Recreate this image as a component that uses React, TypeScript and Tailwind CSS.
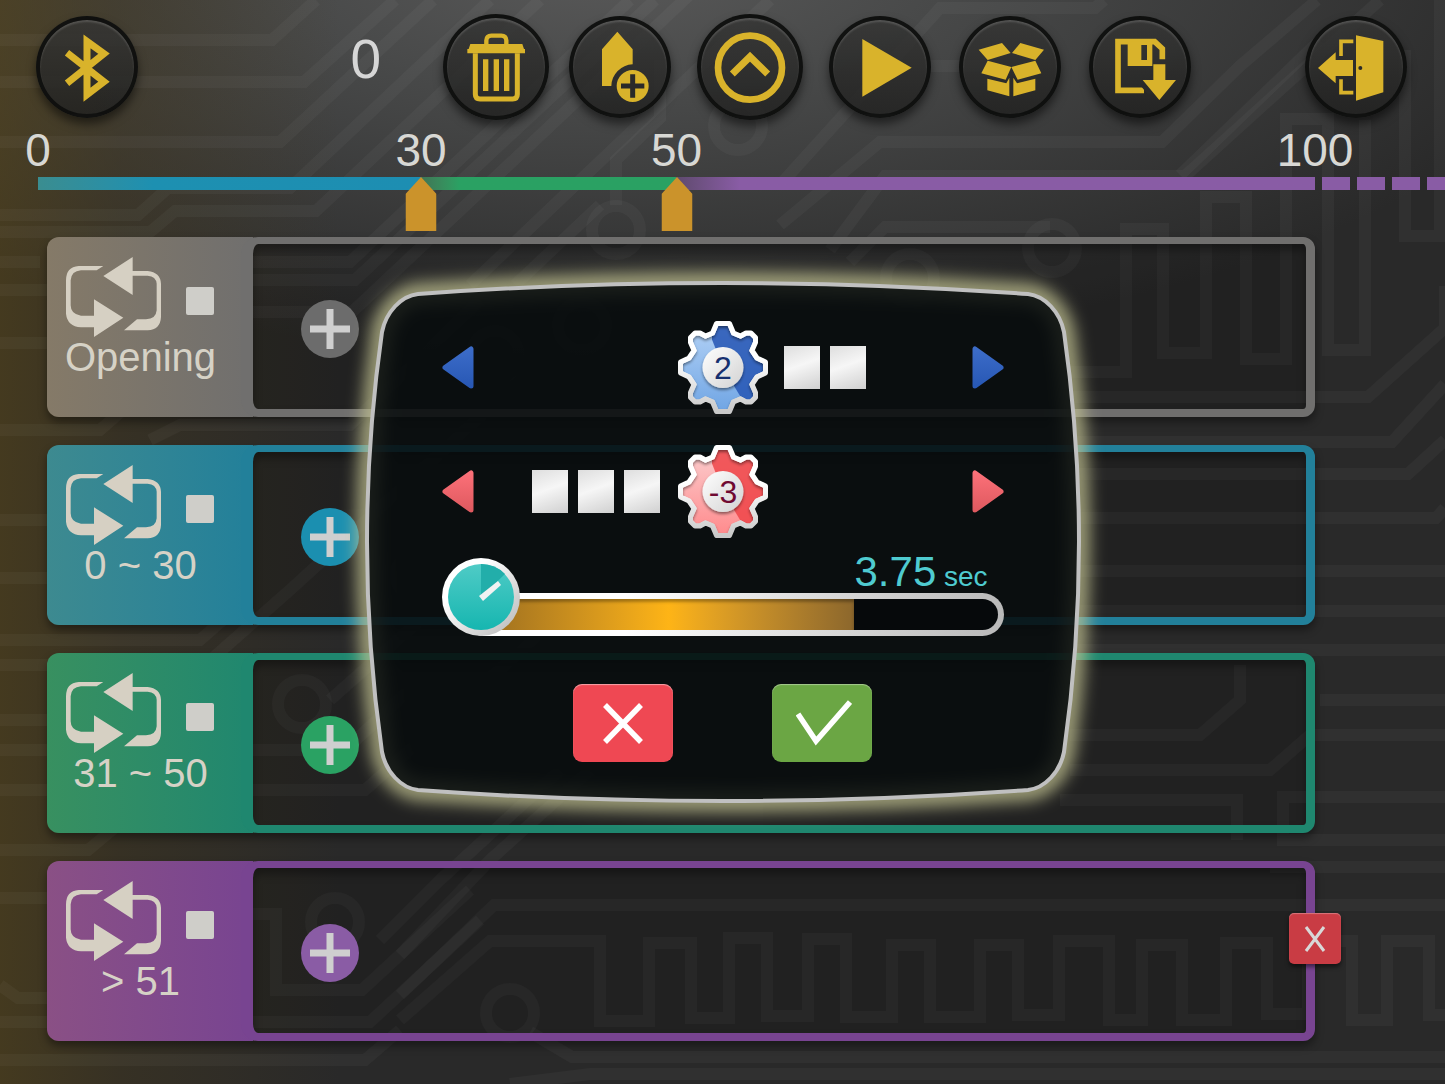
import { useState } from 'react';
import type { ReactNode } from 'react';

const MAX_SECONDS = 5;

const ranges = [
    { label: 'Opening', panel: 'from-[#857a68] to-[#706f6e]', frame: 'border-[#706f6e]', add: 'bg-[#6c6c6c]', removable: false },
    { label: '0 ~ 30', panel: 'from-[#3d8a90] to-[#22809a]', frame: 'border-[#22809a]', add: 'bg-[#1b8fb0]', removable: false },
    { label: '31 ~ 50', panel: 'from-[#389060] to-[#1f876f]', frame: 'border-[#1f876f]', add: 'bg-[#2aa263]', removable: false },
    { label: '> 51', panel: 'from-[#8a5085] to-[#784491]', frame: 'border-[#784491]', add: 'bg-[#8a5ca5]', removable: true },
];

const ticks = [0, 30, 50, 100];

const motors = {
    blue: { light: '#b4d2f6', mid: '#6fa5e4', dark: '#2455b4', text: '#16306f' },
    red: { light: '#fbcfd0', mid: '#ff8a8c', dark: '#ee4448', text: '#6f0a32' },
};

const GEAR =
    'M-6.5,-44 L6.5,-44 L10.5,-34.5 L17.5,-31.5 L23,-34.5 L28,-34.5 L32.5,-30 L32.5,-25 L29,-17 L34,-9.5 L42.5,-5.5 L42.5,5.5 L34,9.5 L29,17 L32.5,25 L32.5,30 L28,34.5 L23,34.5 L17.5,31.5 L10.5,34.5 L6.5,44 L-6.5,44 L-10.5,34.5 L-17.5,31.5 L-23,34.5 L-28,34.5 L-32.5,30 L-32.5,25 L-29,17 L-34,9.5 L-42.5,5.5 L-42.5,-5.5 L-34,-9.5 L-29,-17 L-32.5,-25 L-32.5,-30 L-28,-34.5 L-23,-34.5 L-17.5,-31.5 L-10.5,-34.5 Z';

const Circuit = () => (
    <svg
        className="pointer-events-none absolute inset-0 h-full w-full"
        viewBox="0 0 1445 1084"
        preserveAspectRatio="xMidYMid slice"
        fill="none"
        stroke="#fff"
        strokeOpacity="0.036"
        strokeWidth="12"
        aria-hidden="true"
    >
        <path d="M0,40 H272 L316,0 M0,82 H304 L395,0 M0,142 H280 L433,0" />
        <path d="M0,215 H138 L168,188 H290 L490,0 M0,232 H150 L175,211 H316 L540,0" />
        <path d="M253,262 H350 L630,0 M253,280 H355 L655,0 M253,312 H352 L700,-15" />
        <path d="M470,285 L770,0 M515,285 L600,205" />
        <path d="M616,205 V160 L660,118 V60 M780,185 L940,8 H1095 L1104,0 M930,66 H990" />
        <path d="M780,225 L880,142 H1162 L1240,66 L1317,0 M830,250 L885,176 H1185 L1280,90 L1380,0" />
        <path d="M850,262 L885,227 H1050 M1180,175 L1320,40" />
        <circle cx="616" cy="230" r="24" />
        <circle cx="738" cy="126" r="24" />
        <circle cx="1052" cy="248" r="24" />
        <circle cx="910" cy="278" r="24" />
        <circle cx="582" cy="326" r="24" />
        <circle cx="495" cy="355" r="24" />
        <path d="M1070,372 H1126 V229 H1163 V353 H1206 V197 H1246 V359 H1286 V119 H1328 V350 H1365 V120" />
        <path d="M1405,50 V236 H1440 V0" />
        <path d="M1070,397 H1368 L1445,328 V286 M1070,442 H1392 L1445,384 M1070,474 H1408 L1445,440 M1070,518 H1436 L1445,508" />
        <path d="M1070,571 H1445 M1070,611 H1445 M1070,650 H1445" />
        <path d="M0,262 H40 M0,290 H120 L160,255 M0,343 H110 L170,290 M0,430 H100 L140,395 M150,440 L180,425 H350 L480,300" />
        <path d="M0,520 H60 M0,578 H60 M0,640 H200 L240,605 M0,665 H205 L290,590 L520,380" />
        <path d="M0,720 H110 M0,750 H345 L420,680 M0,790 H365 L600,580 M0,850 H88 L130,815 M0,898 H60" />
        <path d="M0,985 L18,998 H60 M0,1022 H60 M0,1060 H365 L400,1030" />
        <path d="M253,914 H276 V990 H362 L470,890 M253,1022 H370 L480,920 M330,700 L420,620" />
        <circle cx="302" cy="704" r="24" />
        <circle cx="335" cy="922" r="24" />
        <circle cx="700" cy="742" r="24" />
        <circle cx="420" cy="575" r="24" />
        <path d="M380,940 L440,880 L560,770 M400,955 L490,860 L590,770 M400,995 L494,905 H1445" />
        <path d="M400,1020 L490,941 H600 V1021 H649 V943 H691 V1018 H729 V938 H767 V1016 H808 V939 H846 V1017 H892 V945 H930 V1017 H980 V945 H1018 V1015 H1059 V941 H1109 V1020 H1142 V945 H1182 V1020 H1226 V943 H1267 V1014 H1308 V941 H1352 V1020 H1387 V941 H1429 V1015 H1445" />
        <circle cx="510" cy="1013" r="24" />
        <path d="M530,1032 L572,1057 H1445 M510,1084 L590,1074 H1445" />
        <path d="M1060,800 H1237 V840 M1445,797 H1283 V840 H1445 M1270,867 H1445" />
        <path d="M1070,735 H1200 L1240,700 V665 M1070,770 H1270 L1310,735 H1445 M1320,700 H1445" />
    </svg>
);

type RoundButtonProps = { label: string; big?: boolean; children: ReactNode };

const RoundButton = ({ label, big, children }: RoundButtonProps) => (
    <button
        type="button"
        aria-label={label}
        className={`shrink-0 cursor-pointer rounded-full border-4 border-[#0d0e0d]/90 bg-linear-to-b from-[#353534]/85 to-[#222221]/85 shadow-[0_6px_10px_rgba(0,0,0,0.5),inset_0_2px_2px_rgba(255,255,255,0.15)] ${big ? '-mx-[2px] size-[106px]' : 'size-[102px]'}`}
    >
        <svg viewBox={big ? '-147 -147 294 294' : '-141 -141 282 282'} className="h-full w-full" fill="#d9b32b">
            {children}
        </svg>
    </button>
);

const LoopIcon = () => (
    <svg viewBox="0 0 285 240" className="h-20 w-[95px]" fill="#d6d0c3" aria-hidden="true">
        <path d="M112,27 H38 Q0,30 0,70 V170 Q4,208 45,211 H84 V240 L172,182 L84,127 V176 H45 Q14,172 14,145 V70 Q16,42 45,40 H92 Z" />
        <path d="M112,57 L200,0 V42 H245 Q283,46 285,80 V180 Q283,218 245,220 H174 L213,187 H240 Q270,186 272,160 V80 Q270,58 245,56 H200 V114 Z" />
    </svg>
);

type StepArrowProps = { tone: 'blue' | 'red'; flip?: boolean; label: string; onClick: () => void };

const StepArrow = ({ tone, flip, label, onClick }: StepArrowProps) => (
    <button type="button" aria-label={label} onClick={onClick} className="cursor-pointer">
        <svg viewBox="0 0 32 43" className="h-[43px] w-8" aria-hidden="true">
            <defs>
                <linearGradient id={`arrow-${tone}`} x1="0" y1="0" x2="0" y2="1">
                    <stop offset="0" stopColor={tone === 'blue' ? '#3c6cc8' : '#fb7078'} />
                    <stop offset="1" stopColor={tone === 'blue' ? '#2858b5' : '#e05a60'} />
                </linearGradient>
            </defs>
            <path
                d={flip ? 'M3,3 V40 L29,21.5 Z' : 'M29,3 V40 L3,21.5 Z'}
                fill={`url(#arrow-${tone})`}
                stroke={`url(#arrow-${tone})`}
                strokeWidth="5"
                strokeLinejoin="round"
            />
        </svg>
    </button>
);

const Gear = ({ tone, value }: { tone: 'blue' | 'red'; value: number }) => {
    const c = motors[tone];
    return (
        <svg viewBox="-45 -46.5 90 93" className="h-[93px] w-[90px]">
            <defs>
                <linearGradient id={`gear-${tone}`} x1="0" y1="0" x2="0" y2="1">
                    <stop offset="0" stopColor={c.light} />
                    <stop offset="1" stopColor={c.mid} />
                </linearGradient>
                <linearGradient id="gear-rim" x1="0" y1="0" x2="0" y2="1">
                    <stop offset="0.4" stopColor="#ffffff" />
                    <stop offset="1" stopColor="#c9c9c9" />
                </linearGradient>
                <linearGradient id="gear-hub" x1="0" y1="0" x2="1" y2="1">
                    <stop offset="0" stopColor="#ffffff" />
                    <stop offset="1" stopColor="#d2d2d2" />
                </linearGradient>
                <clipPath id="gear-clip">
                    <path d={GEAR} />
                </clipPath>
                <filter id="gear-shade" x="-30%" y="-30%" width="160%" height="160%">
                    <feDropShadow dx="0" dy="2" stdDeviation="1.5" floodColor="#000" floodOpacity="0.45" />
                </filter>
            </defs>
            <path d={GEAR} fill={`url(#gear-${tone})`} />
            <path d="M-11,-60 L60,-60 L60,60 L36,60 L0,0 L-11,-28 Z" fill={c.dark} fillOpacity="0.85" clipPath="url(#gear-clip)" />
            <g clipPath="url(#gear-clip)">
                <path d={GEAR} fill="none" stroke="url(#gear-rim)" strokeWidth="5" filter="url(#gear-shade)" />
            </g>
            <path d={GEAR} fill="none" stroke="url(#gear-rim)" strokeWidth="5" strokeLinejoin="round" />
            <circle r="20.5" fill="url(#gear-hub)" filter="url(#gear-shade)" />
            <text y="11" textAnchor="middle" fontSize="32" fill={c.text}>
                {value}
            </text>
        </svg>
    );
};

const Blocks = ({ count }: { count: number }) => (
    <div className="flex gap-[10px]">
        {Array.from({ length: count }, (_, i) => (
            <span key={i} className="h-[43px] w-9 bg-linear-160 from-[#dedede] via-[#f6f6f6] via-45% to-[#d0d0d0]" />
        ))}
    </div>
);

type MotorRowProps = { tone: 'blue' | 'red'; value: number; onChange: (value: number) => void };

const MotorRow = ({ tone, value, onChange }: MotorRowProps) => (
    <div className="grid grid-cols-[32px_1fr_90px_1fr_32px] items-center">
        <StepArrow tone={tone} label={`Decrease ${tone} motor`} onClick={() => onChange(Math.max(-4, value - 1))} />
        <div className="flex justify-end pr-[18px]">{value < 0 && <Blocks count={-value} />}</div>
        <Gear tone={tone} value={value} />
        <div className="flex pl-4">{value > 0 && <Blocks count={value} />}</div>
        <StepArrow tone={tone} flip label={`Increase ${tone} motor`} onClick={() => onChange(Math.min(4, value + 1))} />
    </div>
);

const Clock = () => (
    <svg viewBox="0 0 78 78" className="absolute bottom-0 left-0 size-[78px]" aria-hidden="true">
        <defs>
            <linearGradient id="clock-rim" x1="0" y1="0" x2="1" y2="1">
                <stop offset="0.3" stopColor="#ffffff" />
                <stop offset="1" stopColor="#b5b5b5" />
            </linearGradient>
            <linearGradient id="clock-face" x1="0" y1="0" x2="0" y2="1">
                <stop offset="0" stopColor="#4fcbc6" />
                <stop offset="1" stopColor="#16b6b0" />
            </linearGradient>
        </defs>
        <circle cx="39" cy="39" r="39" fill="url(#clock-rim)" />
        <circle cx="39" cy="39" r="33" fill="url(#clock-face)" />
        <path d="M39,6 A33,33 0 0 1 63,16 L39,39 Z" fill="#22aeaa" />
        <path d="M37,38 L56,23 L59,27 L41,43 Z" fill="#f2f2f2" />
    </svg>
);

const MODAL_SHAPE =
    'M51,12 Q356,-10 661,12 C678,14 693,30 697,50 Q727,260 697,470 C693,490 678,506 661,508 Q356,530 51,508 C34,506 19,490 15,470 Q-15,260 15,50 C19,30 34,14 51,12 Z';

const MotionDialog = () => {
    const [blue, setBlue] = useState(2);
    const [red, setRed] = useState(-3);
    const [seconds, setSeconds] = useState(3.75);

    return (
        <div role="dialog" aria-label="Motor settings" className="relative w-[712px] px-[75px] pt-[39px] pb-10">
            <svg viewBox="0 0 712 520" className="absolute inset-0 h-full w-full overflow-visible" aria-hidden="true">
                <defs>
                    <filter id="glow" x="-10%" y="-12%" width="120%" height="124%">
                        <feGaussianBlur stdDeviation="8" />
                    </filter>
                </defs>
                <path d={MODAL_SHAPE} fill="none" stroke="#c8c896" strokeWidth="22" strokeOpacity="0.75" filter="url(#glow)" />
                <path d={MODAL_SHAPE} fill="#070b0c" fillOpacity="0.88" stroke="#c0c0c0" strokeWidth="4" />
            </svg>
            <div className="relative">
                <div className="flex flex-col gap-[31px]">
                    <MotorRow tone="blue" value={blue} onChange={setBlue} />
                    <MotorRow tone="red" value={red} onChange={setRed} />
                </div>

                <div className="relative mt-5 flex h-[78px] flex-col justify-between">
                    <output htmlFor="seconds" className="pr-4 text-right text-[42px] leading-7 text-[#4fcbd0]">
                        {seconds} <span className="-ml-1 text-[28px]">sec</span>
                    </output>
                    <div className="ml-5 h-[43px] overflow-hidden rounded-full bg-linear-to-r from-white from-30% to-[#b9b9b9] p-[6px]">
                        <div className="h-full overflow-hidden rounded-full bg-[#06090b]">
                            <div
                                className="h-full bg-linear-to-r from-[#95691f] via-[#feb416] via-52% to-[#8c672c] shadow-[inset_0_3px_3px_rgba(0,0,0,0.3)]"
                                style={{ width: `calc(${(seconds / MAX_SECONDS) * 100}% - 11px)` }}
                            />
                        </div>
                    </div>
                    <Clock />
                    <input
                        id="seconds"
                        type="range"
                        aria-label="Seconds"
                        min={0}
                        max={MAX_SECONDS}
                        step={0.25}
                        value={seconds}
                        onChange={(e) => setSeconds(Number(e.target.value))}
                        className="absolute inset-x-0 bottom-0 h-[43px] cursor-pointer opacity-0"
                    />
                </div>

                <div className="mt-12 flex justify-center gap-[99px]">
                    <button
                        type="button"
                        aria-label="Cancel"
                        className="flex h-[78px] w-[100px] cursor-pointer items-center justify-center rounded-[9px] bg-[#ef4853] shadow-[inset_0_1px_1px_rgba(255,255,255,0.5)]"
                    >
                        <svg viewBox="0 0 40 42" className="h-[42px] w-10" fill="none" stroke="#fff" strokeWidth="5.5" aria-hidden="true">
                            <path d="M2,3 L38,40 M38,3 L2,40" />
                        </svg>
                    </button>
                    <button
                        type="button"
                        aria-label="Confirm"
                        className="flex h-[78px] w-[100px] cursor-pointer items-center justify-center rounded-[9px] bg-[#6ba644] shadow-[inset_0_1px_1px_rgba(255,255,255,0.4)]"
                    >
                        <svg viewBox="0 0 56 46" className="ml-1 h-[46px] w-14" fill="none" stroke="#fff" strokeWidth="5.5" aria-hidden="true">
                            <path d="M2,14 L20,41 L54,2" />
                        </svg>
                    </button>
                </div>
            </div>
        </div>
    );
};

const Toolbar = () => (
    <header className="flex h-[122px] items-center pt-3 pr-[38px] pl-9">
        <RoundButton label="Bluetooth">
            <path d="M-60,-43 L51,44 L0,83 V-77 L51,-40 L-60,49" fill="none" stroke="#d9b32b" strokeWidth="21" />
        </RoundButton>
        <span className="flex-1 pr-16 pb-4 text-right text-[55px] leading-[60px] text-[#d6d6d6]">0</span>
        <div className="flex items-center">
            <div className="mr-[22px] flex">
                <RoundButton label="Delete" big>
                    <path d="M-77,-69 H79 L84,-54 H87 V-41 H-86 V-54 H-82 Z" />
                    <path d="M-29,-66 V-80 Q-28,-94 -14,-94 H16 Q30,-94 31,-80 V-66" fill="none" stroke="#d9b32b" strokeWidth="13" />
                    <path d="M-62,-41 V82 Q-62,96 -48,96 H50 Q64,96 64,82 V-41" fill="none" stroke="#d9b32b" strokeWidth="15" />
                    <path d="M-39,-23 h16 v95 h-16 z M-7,-23 h16 v95 h-16 z M24,-23 h16 v95 h-16 z" />
                </RoundButton>
            </div>
            <div className="flex items-center gap-7">
                <RoundButton label="Add marker">
                    <path d="M-8,-106 L38,-53 V-8 A66,66 0 0 0 -26,57 H-54 V-53 Z" />
                    <circle cx="38" cy="57" r="48" />
                    <path d="M38,22 V92 M3,57 H73" stroke="#2a2a29" strokeWidth="15" />
                </RoundButton>
                <RoundButton label="Collapse" big>
                    <circle cy="2" r="96" fill="none" stroke="#d9b32b" strokeWidth="20" />
                    <path d="M-53,21 L0,-31 L53,21" fill="none" stroke="#d9b32b" strokeWidth="21" />
                </RoundButton>
                <RoundButton label="Play">
                    <path d="M-53,-84 L95,2 L-53,89 Z" />
                </RoundButton>
                <RoundButton label="Open project">
                    <path d="M-94,-52 L-24,-72 L2,-42 L-67,-21 Z M102,-52 L31,-72 L6,-42 L76,-21 Z" />
                    <path d="M-67,-19 L4,0 L-13,38 L-86,19 Z M76,-19 L4,0 L23,38 L94,19 Z" />
                    <path d="M-68,35 L-11,49 L-2,32 V88 L-68,70 Z M76,35 L21,49 L10,32 V88 L76,70 Z" />
                </RoundButton>
                <RoundButton label="Save">
                    <path d="M67,-23 V-55 L44,-76 H-66 V70 H12" fill="none" stroke="#d9b32b" strokeWidth="17" />
                    <path d="M-37,-76 H37 V-3 H-37 Z M4,-66 V-21 H21 V-66 Z" fillRule="evenodd" />
                    <path d="M5,60 L22,80 H40 V60 Z" fill="#2b2b2a" />
                    <path d="M40,-8 H76 V39 H108 L58,99 L8,39 H40 Z" />
                </RoundButton>
            </div>
        </div>
        <div className="ml-[114px] flex">
            <RoundButton label="Exit">
                <path d="M0,-95 L82,-78 V76 L0,101 Z" />
                <circle cx="13" cy="3" r="6" fill="#2a2a29" />
                <path d="M-8,-77 H-45 V-33 M-8,77 H-45 V37" fill="none" stroke="#d9b32b" strokeWidth="11" />
                <path d="M-114,3 L-61,-44 V-21 H-9 V27 H-61 V49 Z" />
            </RoundButton>
        </div>
    </header>
);

const Timeline = () => (
    <section aria-label="Timeline" className="flex items-end pl-[38px]">
        <div className="relative min-w-0 flex-1 pt-[55px]">
            {ticks.map((tick) => (
                <span
                    key={tick}
                    className="absolute top-0 -translate-x-1/2 text-[46px] leading-[57px] text-[#d8d8d4]"
                    style={{ left: `${tick}%` }}
                >
                    {tick}
                </span>
            ))}
            <div className="flex h-[13px]">
                <div className="w-[30%] bg-linear-to-r from-[#3a8d90] via-[#1d90b1] via-30% to-[#1d8eb2]" />
                <div className="w-[20%] bg-linear-to-r from-[#3f7455] via-[#2aa163] via-15% to-[#2aa163]" />
                <div className="w-1/2 bg-linear-to-r from-[#5f4a6e] via-[#895ca5] via-10% to-[#895ca5]" />
            </div>
            {[30, 50].map((at) => (
                <button
                    key={at}
                    type="button"
                    aria-label={`Marker ${at}`}
                    className="absolute top-[55px] -translate-x-1/2 cursor-pointer"
                    style={{ left: `${at}%` }}
                >
                    <svg viewBox="0 0 31 54" className="h-[54px] w-[31px]" fill="#cb932b" aria-hidden="true">
                        <path d="M15.5,0 L31,17 V54 H0 V17 Z" />
                    </svg>
                </button>
            ))}
        </div>
        <div className="flex w-[130px] shrink-0 gap-[7px] overflow-hidden pl-[7px]">
            {[0, 1, 2, 3].map((i) => (
                <span key={i} className="h-[13px] w-7 shrink-0 bg-[#895ca5]" />
            ))}
        </div>
    </section>
);

const App = () => {
    return (
        <div className="relative min-h-screen overflow-hidden bg-[#292929] bg-[linear-gradient(to_right,rgba(85,68,25,0.62),rgba(70,58,30,0.45)_120px,rgba(60,52,35,0)_340px),radial-gradient(ellipse_1000px_400px_at_42%_-4%,#5a5a5a,#484949_35%,rgba(41,41,41,0))] font-['Liberation_Sans',Arial,sans-serif]">
            <Circuit />
            <div className="relative">
                <Toolbar />
                <Timeline />
                <ul className="mt-[47px] mr-[130px] ml-[47px] flex flex-col gap-7 pb-[43px]">
                    {ranges.map((range) => (
                        <li key={range.label} className="relative flex h-[180px] rounded-xl shadow-[0_5px_8px_rgba(0,0,0,0.4)]">
                            <div className={`w-[206px] shrink-0 rounded-l-xl bg-linear-to-r ${range.panel}`}>
                                <div className="w-[187px] pt-5">
                                    <div className="flex items-center gap-[25px] pl-[19px]">
                                        <LoopIcon />
                                        <span className="mt-[7px] size-7 rounded-[2px] bg-[#cfcec9]" />
                                    </div>
                                    <p className="text-center text-[40px] leading-10 text-[#d6d2c6]">{range.label}</p>
                                </div>
                            </div>
                            {/* left border slides over the panel so the well gets rounded inner corners */}
                            <div
                                className={`-ml-3 flex-1 rounded-l-[17px] rounded-r-xl border-t-[7px] border-r-[9px] border-b-8 border-l-12 bg-black/18 pt-[56px] pl-12 shadow-[inset_0_6px_8px_rgba(0,0,0,0.35)] ${range.frame}`}
                            >
                                <button
                                    type="button"
                                    aria-label={`Add action to ${range.label}`}
                                    className={`flex size-[58px] cursor-pointer items-center justify-center rounded-full ${range.add}`}
                                >
                                    <svg viewBox="0 0 40 40" className="size-10" stroke="#cfcfcf" strokeWidth="7" aria-hidden="true">
                                        <path d="M20,0 V40 M0,20 H40" />
                                    </svg>
                                </button>
                            </div>
                            {range.removable && (
                                <button
                                    type="button"
                                    aria-label={`Remove ${range.label}`}
                                    className="absolute top-[52px] -right-[26px] flex h-[51px] w-[52px] cursor-pointer items-center justify-center rounded-[5px] bg-[#c93c44] shadow-[0_3px_4px_rgba(0,0,0,0.5),inset_0_1px_1px_rgba(255,255,255,0.3)]"
                                >
                                    <svg viewBox="0 0 22 28" className="h-7 w-[22px]" stroke="#d8d8d8" strokeWidth="3" aria-hidden="true">
                                        <path d="M2,2 L20,26 M20,2 L2,26" />
                                    </svg>
                                </button>
                            )}
                        </li>
                    ))}
                </ul>
            </div>
            <div className="absolute inset-0 flex items-center justify-center">
                <MotionDialog />
            </div>
        </div>
    );
};

export default App;
